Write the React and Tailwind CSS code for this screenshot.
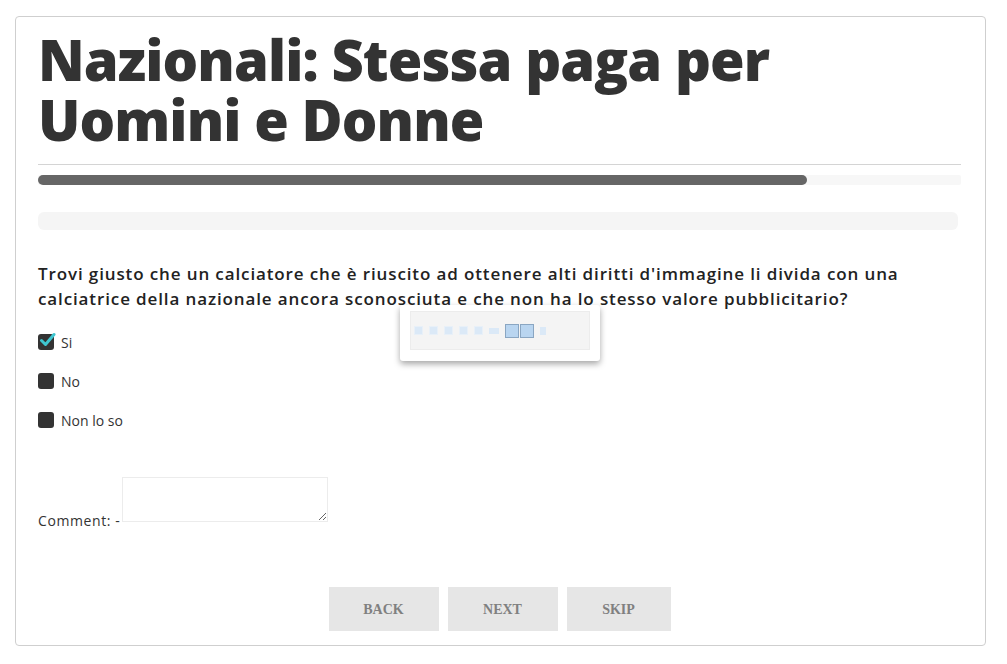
import React from "react";

function Check({ checked, label }) {
  return (
    <div className="flex items-center h-[16px] gap-[7px]">
      <div className="relative w-[16px] h-[16px] rounded-[3px] bg-[#333333]">
        {checked && (
          <svg className="absolute left-[1px] top-[-3px]" width="17" height="17" viewBox="0 0 17 17">
            <path d="M2.5 9.5 L6.5 13.5 L15 3.5" fill="none" stroke="#3fc6d0" strokeWidth="3" strokeLinecap="round" strokeLinejoin="round" />
          </svg>
        )}
      </div>
      <span className="text-[14px] text-[#333]">{label}</span>
    </div>
  );
}

export default function App() {
  const sq = "w-[9px] h-[9px] bg-[#dbe9f7] border border-[#e8f0f8]";
  return (
    <div className="w-[1007px] h-[664px] bg-white pt-[16px] pl-[15px]" style={{ fontFamily: "'Open Sans', 'Liberation Sans', sans-serif" }}>
      <div className="relative w-[971px] h-[630px] border border-[#cfcfcf] rounded-[4px] pl-[22px] pr-[24px] pt-[12px]">
        <h1 className="text-[56px] leading-[60px] font-extrabold text-[#333333] tracking-[-0.9px]" style={{ fontFamily: "'Open Sans', sans-serif" }}>
          Nazionali: Stessa paga per<br />Uomini e Donne
        </h1>
        <div className="mt-[15px] h-px bg-[#d4d4d4]" />
        <div className="mt-[10px] h-[10px] bg-[#f7f7f7] rounded-[2px]">
          <div className="h-[10px] w-[769px] bg-[#666666] rounded-full" />
        </div>
        <div className="mt-[27px] h-[18px] w-[920px] bg-[#f5f5f5] rounded-[6px]" />
        <p className="mt-[31px] text-[17px] leading-[25px] font-semibold text-[#222] tracking-[0.88px]">
          Trovi giusto che un calciatore che è riuscito ad ottenere alti diritti d'immagine li divida con una calciatrice della nazionale ancora sconosciuta e che non ha lo stesso valore pubblicitario?
        </p>
        <div className="mt-[23px] flex flex-col gap-[23px]">
          <Check checked label="Si" />
          <Check label="No" />
          <Check label="Non lo so" />
        </div>
        <div className="mt-[49px] flex items-end">
          <span className="text-[14px] text-[#333] leading-[14px] mb-[-6px] tracking-[0.6px]">Comment: -</span>
          <textarea className="ml-[2px] w-[206px] h-[45px] border border-[#ececec] outline-none resize-y" />
        </div>
        <div className="mt-[65px] flex justify-center gap-[9px]" style={{ fontFamily: "'Liberation Serif', serif" }}>
          <button className="w-[110px] h-[44px] bg-[#e6e6e6] text-[#808080] font-bold text-[14px]">BACK</button>
          <button className="w-[110px] h-[44px] bg-[#e6e6e6] text-[#808080] font-bold text-[14px]">NEXT</button>
          <button className="w-[104px] h-[44px] bg-[#e6e6e6] text-[#808080] font-bold text-[14px]">SKIP</button>
        </div>
        <div className="absolute left-[384px] top-[288px] w-[200px] h-[56px] bg-white rounded-[3px] shadow-[0_3px_6px_rgba(0,0,0,0.35)] px-[10px] pt-[6px]">
          <div className="h-[39px] bg-[#f4f4f4] border border-[#ececec] flex items-center pl-[3px] gap-[6px]">
            <div className={sq} />
            <div className={sq} />
            <div className={sq} />
            <div className={sq} />
            <div className={sq} />
            <div className="w-[10px] h-[6px] bg-[#dbe9f7]" />
            <div className="flex gap-[1px]">
              <div className="w-[14px] h-[14px] bg-[#b9d5f0] border border-[#8aa6c2]" />
              <div className="w-[14px] h-[14px] bg-[#b9d5f0] border border-[#8aa6c2]" />
            </div>
            <div className="w-[6px] h-[8px] bg-[#dbe9f7]" />
          </div>
        </div>
      </div>
    </div>
  );
}
